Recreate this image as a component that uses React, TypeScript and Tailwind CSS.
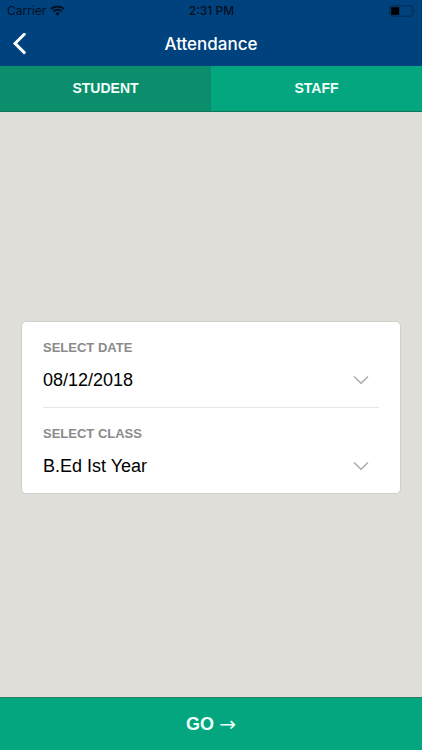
import { useState } from 'react';

type Tab = 'student' | 'staff';

type SelectFieldProps = {
  id: string;
  label: string;
  value: string;
  options: string[];
  onChange: (value: string) => void;
};

const dates = ['08/12/2018', '07/12/2018', '06/12/2018'];
const classes = ['B.Ed Ist Year', 'B.Ed IInd Year'];

function StatusBar() {
  return (
    <div className="flex h-[22px] items-center text-[12px] leading-4 text-[#04101f]">
      <div className="flex flex-1 items-center gap-1 pl-[7px]">
        <span>Carrier</span>
        <svg width="15" height="12" viewBox="0 0 15 12" fill="none" aria-hidden="true">
          <path d="M1 4C4.8 0.5 10.2 0.5 14 4" stroke="currentColor" strokeWidth="2" />
          <path d="M3.3 6.4C5.8 4.1 9.2 4.1 11.7 6.4" stroke="currentColor" strokeWidth="1.9" />
          <path d="M7.5 10.8L5.2 8.2C6.5 7 8.5 7 9.8 8.2Z" fill="currentColor" />
        </svg>
      </div>
      <span className="font-medium">2:31 PM</span>
      <div className="flex flex-1 justify-end pr-[6px]">
        <svg width="27" height="12" viewBox="0 0 27 12" fill="none" aria-hidden="true">
          <rect x="0.9" y="0.9" width="22.8" height="10.2" rx="2.2" stroke="#06294f" />
          <rect x="2.2" y="2.2" width="8" height="7.6" fill="#000" />
          <path d="M25 4.2C26.4 4.8 26.4 7.2 25 7.8Z" fill="#06294f" />
        </svg>
      </div>
    </div>
  );
}

function SelectField({ id, label, value, options, onChange }: SelectFieldProps) {
  return (
    <div>
      <label htmlFor={id} className="block text-[13px] leading-4 font-bold text-[#8b8b8b]">
        {label}
      </label>
      <div className="mt-2 grid items-center">
        <select
          id={id}
          value={value}
          onChange={e => onChange(e.target.value)}
          className="col-start-1 row-start-1 h-8 w-full appearance-none bg-transparent text-[18px] text-black"
        >
          {options.map(option => (
            <option key={option}>{option}</option>
          ))}
        </select>
        <svg
          className="pointer-events-none col-start-1 row-start-1 mr-[10px] justify-self-end"
          width="16"
          height="10"
          viewBox="0 0 16 10"
          fill="none"
          aria-hidden="true"
        >
          <path d="M1 1.5L8 8.3L15 1.5" stroke="#a9a9a9" strokeWidth="1.4" />
        </svg>
      </div>
    </div>
  );
}

export default function AttendancePage() {
  const [tab, setTab] = useState<Tab>('student');
  const [date, setDate] = useState(dates[0]);
  const [className, setClassName] = useState(classes[0]);

  return (
    <div className="flex min-h-screen flex-col bg-[#dfded9] font-['Liberation_Sans',Arial,sans-serif]">
      <header className="bg-[#00427e] font-[Inter,sans-serif]">
        <StatusBar />
        <div className="grid h-11 grid-cols-[48px_1fr_48px] items-center">
          <button type="button" aria-label="Back" className="flex h-full items-center pl-3">
            <svg width="15" height="22" viewBox="0 0 15 22" fill="none" aria-hidden="true">
              <path d="M12.3 1.2L3 10.4L12.3 19.6" stroke="#fff" strokeWidth="2.9" strokeLinecap="round" />
            </svg>
          </button>
          <h1 className="text-center text-[17px] leading-6 font-medium text-white">Attendance</h1>
        </div>
      </header>

      <div className="grid h-[46px] grid-cols-2 border-b border-[#147459] text-[14px] font-bold text-[#effffa]">
        <button
          type="button"
          onClick={() => setTab('student')}
          className={tab === 'student' ? 'bg-[#0c8e6d]' : 'bg-[#03a67e]'}
        >
          STUDENT
        </button>
        <button
          type="button"
          onClick={() => setTab('staff')}
          className={tab === 'staff' ? 'bg-[#0c8e6d]' : 'bg-[#03a67e]'}
        >
          STAFF
        </button>
      </div>

      <main className="flex flex-1 flex-col justify-center px-[21px] pt-[6px]">
        <div className="rounded-[5px] border border-[#cfcfcc] bg-white px-[21px] pt-[18px] pb-[11px]">
          <SelectField id="date" label="SELECT DATE" value={date} options={dates} onChange={setDate} />
          <hr className="mt-[11px] mb-[18px] border-[#e6e6e6]" />
          <SelectField
            id="class"
            label="SELECT CLASS"
            value={className}
            options={classes}
            onChange={setClassName}
          />
        </div>
      </main>

      <button
        type="button"
        className="flex h-[53px] items-center justify-center gap-[5px] border-t border-[#2d7d68] bg-[#03a67e] text-[18px] font-bold text-[#effffa]"
      >
        GO <span className="font-['DejaVu_Sans',sans-serif] text-[20px] font-normal">→</span>
      </button>
    </div>
  );
}
